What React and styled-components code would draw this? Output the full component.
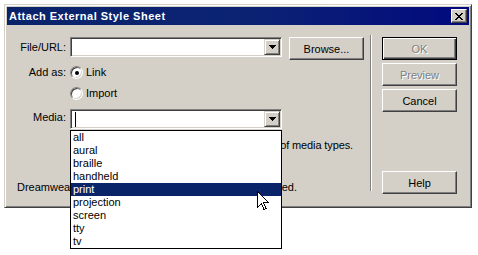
import styled, { createGlobalStyle } from 'styled-components';

const FACE = '#d4d0c8';

const GlobalStyle = createGlobalStyle`
  html, body {
    margin: 0;
    background: #fff;
  }
  body {
    font-family: "Liberation Sans", Arial, sans-serif;
    font-size: 11px;
    color: #000;
  }
`;

const Page = styled.div`
  box-sizing: border-box;
  min-height: 255px;
  padding: 4px 0 0 4px;
`;

const Window = styled.div`
  position: relative;
  box-sizing: border-box;
  width: 468px;
  height: 204px;
  padding: 2px;
  background: ${FACE};
  border: 1px solid;
  border-color: ${FACE} #404040 #404040 ${FACE};
  box-shadow: inset 1px 1px #fff, inset -1px -1px #808080;
  display: flex;
  flex-direction: column;
`;

const TitleBar = styled.div`
  height: 18px;
  display: flex;
  align-items: center;
  justify-content: space-between;
  padding: 0 2px;
  background: linear-gradient(90deg, #0a246a 0%, #0b2274 55%, #02097e 100%);
`;

const Title = styled.span`
  color: #fff;
  font-weight: bold;
  font-size: 11px;
  letter-spacing: 0.5px;
`;

const CloseButton = styled.div`
  box-sizing: border-box;
  width: 16px;
  height: 14px;
  background: ${FACE};
  border: 1px solid;
  border-color: #fff #404040 #404040 #fff;
  box-shadow: inset -1px -1px #808080;
  display: flex;
  align-items: center;
  justify-content: center;
`;

const Body = styled.div`
  flex: 1;
  display: flex;
  padding-top: 12px;
`;

const LeftPane = styled.div`
  box-sizing: border-box;
  width: 363px;
  padding-left: 10px;
  display: flex;
  flex-direction: column;
`;

const Row = styled.div`
  display: flex;
  align-items: flex-start;
  margin-top: ${p => p.$top || 0}px;
`;

const Label = styled.span`
  box-sizing: border-box;
  width: 53px;
  padding-right: 4px;
  text-align: right;
  line-height: ${p => p.$lh || 13}px;
  white-space: nowrap;
`;

const FieldWrap = styled.div`
  position: relative;
`;

const Combo = styled.div`
  box-sizing: border-box;
  width: 212px;
  height: 20px;
  padding: 1px;
  display: flex;
  background: #fff;
  border: 1px solid;
  border-color: #808080 #fff #fff #808080;
  box-shadow: inset 1px 1px #404040, inset -1px -1px ${FACE};
`;

const ComboText = styled.div`
  flex: 1;
  display: flex;
`;

const Caret = styled.span`
  width: 1px;
  height: 15px;
  margin: 1px 0 0 3px;
  background: #000;
`;

const DropButton = styled.div`
  box-sizing: border-box;
  width: 16px;
  height: 16px;
  background: ${FACE};
  border: 1px solid;
  border-color: ${FACE} #404040 #404040 ${FACE};
  box-shadow: inset 1px 1px #fff, inset -1px -1px #808080;
  display: flex;
  align-items: center;
  justify-content: center;
`;

const Button = styled.div`
  box-sizing: border-box;
  width: 75px;
  height: 23px;
  margin-left: ${p => p.$left || 0}px;
  margin-top: ${p => p.$top || 0}px;
  display: flex;
  align-items: center;
  justify-content: center;
  background: ${FACE};
  border: 1px solid;
  border-color: ${p => (p.$default ? '#000' : '#fff #404040 #404040 #fff')};
  box-shadow: ${p =>
    p.$default
      ? 'inset 1px 1px #fff, inset -1px -1px #404040, inset -2px -2px #808080'
      : 'inset -1px -1px #808080'};
  color: ${p => (p.$disabled ? '#808080' : '#000')};
  text-shadow: ${p => (p.$disabled ? '1px 1px #fff' : 'none')};
`;

const RadioRow = styled.label`
  display: flex;
  align-items: center;
  height: 13px;
  line-height: 13px;
  gap: 3px;
`;

const Radio = styled.span`
  position: relative;
  box-sizing: border-box;
  width: 13px;
  height: 13px;
  border-radius: 50%;
  background: #fff;
  border: 1px solid;
  border-color: #808080 #fff #fff #808080;
  box-shadow: inset 1px 1px #404040, inset -1px -1px ${FACE};

  &::after {
    content: '';
    display: ${p => (p.$checked ? 'block' : 'none')};
    position: absolute;
    left: 3.5px;
    top: 3.5px;
    width: 4px;
    height: 4px;
    border-radius: 50%;
    background: #000;
  }
`;

const Hint = styled.div`
  margin-top: ${p => p.$top}px;
  padding-left: ${p => p.$indent || 0}px;
  letter-spacing: ${p => p.$tight || 0}px;
  line-height: 13px;
  white-space: nowrap;
`;

const Separator = styled.div`
  width: 1px;
  height: 156px;
  margin-top: -2px;
  background: #808080;
  border-right: 1px solid #fff;
`;

const RightPane = styled.div`
  margin-left: 10px;
  display: flex;
  flex-direction: column;
  gap: 3px;
`;

const List = styled.ul`
  position: absolute;
  z-index: 2;
  top: calc(100% + 1px);
  left: 0;
  box-sizing: border-box;
  width: 212px;
  margin: 0;
  padding: 0;
  list-style: none;
  background: #fff;
  border: 1px solid #000;
`;

const Item = styled.li`
  height: 13px;
  line-height: 13px;
  padding-left: 2px;
  background: ${p => (p.$selected ? '#0a246a' : 'transparent')};
  color: ${p => (p.$selected ? '#fff' : '#000')};
`;

const Pointer = styled.svg`
  position: absolute;
  z-index: 3;
  left: 252px;
  top: 186px;
`;

const Arrow = () => (
  <svg width="7" height="4" viewBox="0 0 7 4" shapeRendering="crispEdges">
    <polygon points="0,0 7,0 3.5,4" fill="#000" />
  </svg>
);

const ComboBox = ({ caret }) => (
  <Combo>
    <ComboText>{caret && <Caret />}</ComboText>
    <DropButton>
      <Arrow />
    </DropButton>
  </Combo>
);

const MEDIA = ['all', 'aural', 'braille', 'handheld', 'print', 'projection', 'screen', 'tty', 'tv'];

export default function App() {
  return (
    <Page>
      <GlobalStyle />
      <Window>
        <TitleBar>
          <Title>Attach External Style Sheet</Title>
          <CloseButton>
            <svg width="8" height="7" viewBox="0 0 8 7" shapeRendering="crispEdges">
              <path d="M0,0h2v1h1v1h2v-1h1v-1h2v1h-1v1h-1v1h-1v1h1v1h1v1h1v1h-2v-1h-1v-1h-2v1h-1v1h-2v-1h1v-1h1v-1h1v-1h-1v-1h-1v-1h-1z" fill="#000" />
            </svg>
          </CloseButton>
        </TitleBar>
        <Body>
          <LeftPane>
            <Row>
              <Label $lh={20}>File/URL:</Label>
              <ComboBox />
              <Button $left={7}>Browse...</Button>
            </Row>
            <Row $top={6}>
              <Label>Add as:</Label>
              <RadioRow>
                <Radio $checked />
                Link
              </RadioRow>
            </Row>
            <Row $top={8}>
              <Label />
              <RadioRow>
                <Radio />
                Import
              </RadioRow>
            </Row>
            <Row $top={9}>
              <Label $lh={16}>Media:</Label>
              <FieldWrap>
                <ComboBox caret />
                <List>
                  {MEDIA.map(m => (
                    <Item key={m} $selected={m === 'print'}>
                      {m}
                    </Item>
                  ))}
                </List>
              </FieldWrap>
            </Row>
            <Hint $top={10} $indent={54} $tight={-0.12}>
              You may also enter a comma-separated list of media types.
            </Hint>
            <Hint $top={29}>Dreamweaver has sample style sheets to get you started.</Hint>
          </LeftPane>
          <Separator />
          <RightPane>
            <Button $default $disabled>OK</Button>
            <Button $disabled>Preview</Button>
            <Button>Cancel</Button>
            <Button $top={56}>Help</Button>
          </RightPane>
        </Body>
        <Pointer width="12" height="20" viewBox="0 0 12 20" shapeRendering="crispEdges">
          <path d="M0.5,0.5 L0.5,16.5 L4.5,12.5 L7,18.5 L9,17.5 L6.5,11.5 L11.5,11.5 Z" fill="#fff" stroke="#000" strokeWidth="1" />
        </Pointer>
      </Window>
    </Page>
  );
}
